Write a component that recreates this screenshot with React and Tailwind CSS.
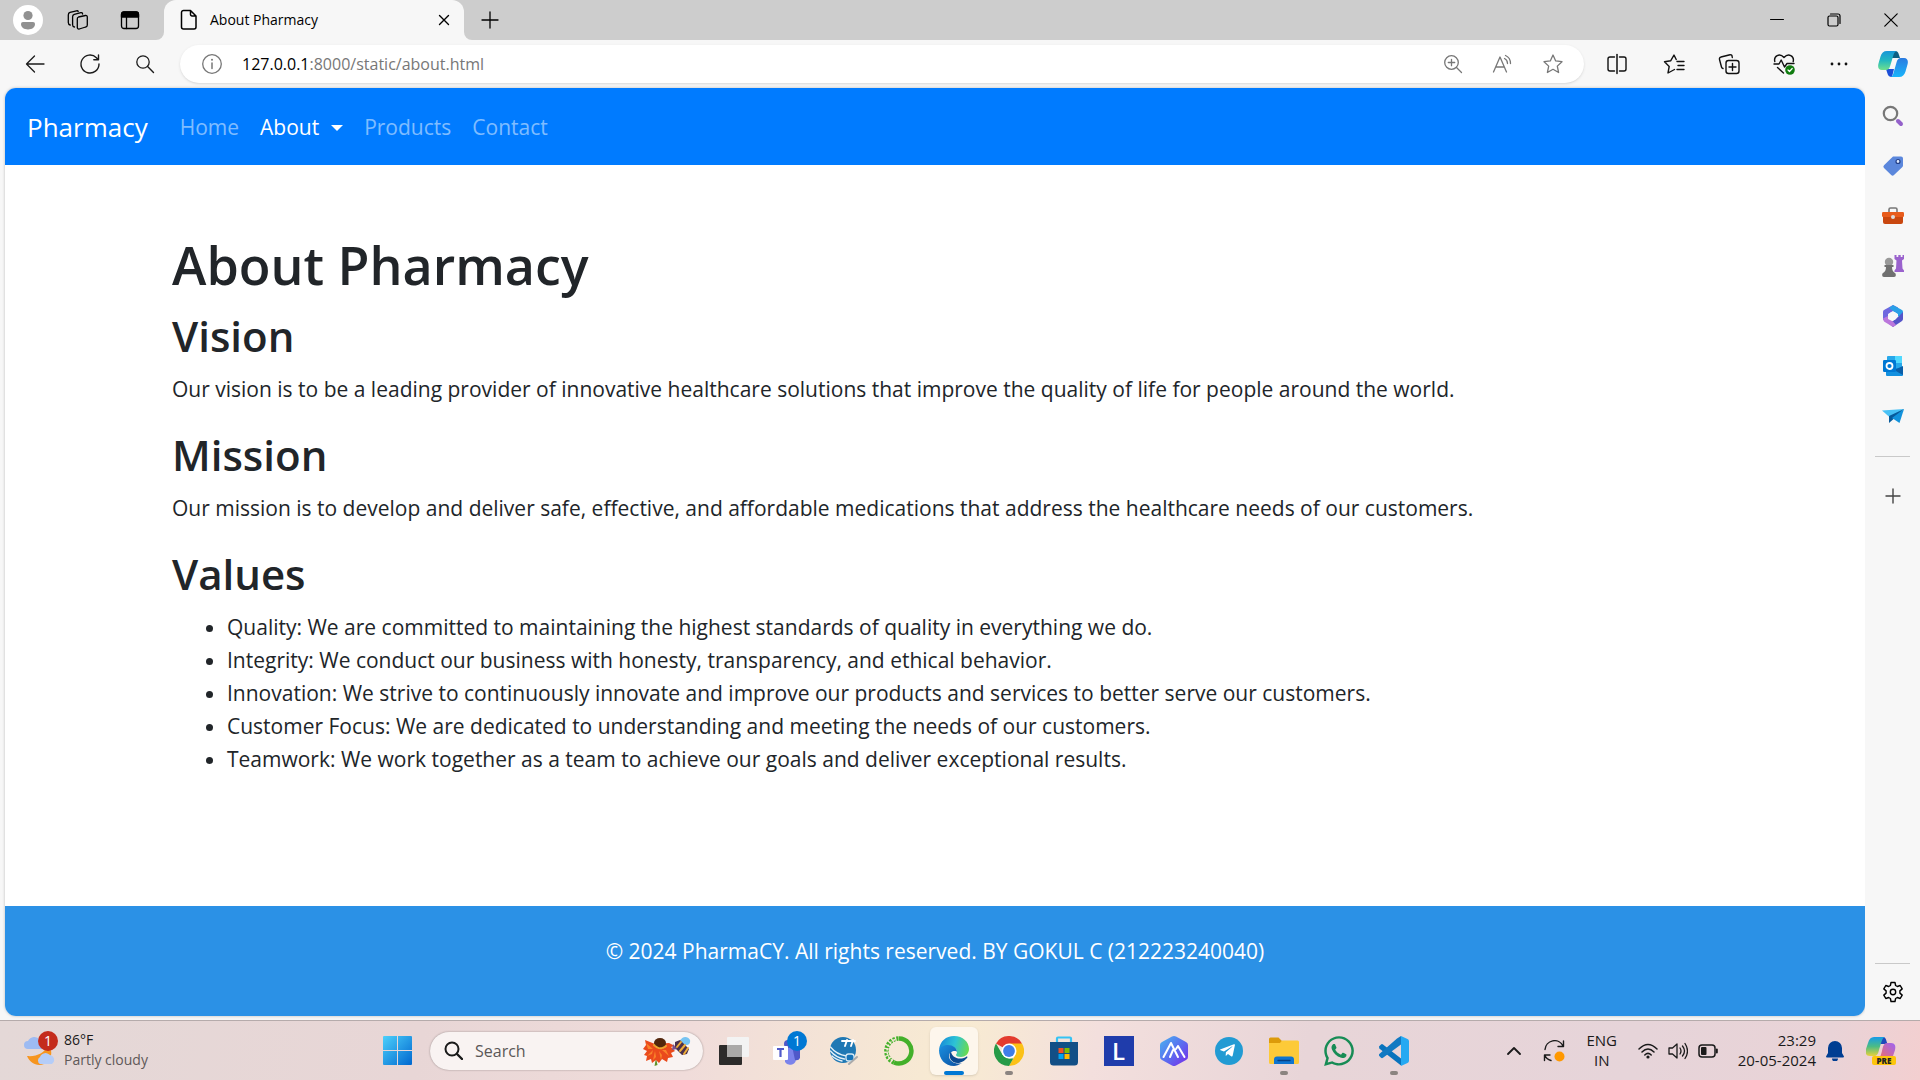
import React from 'react';
import { FaWhatsapp, FaTelegramPlane } from 'react-icons/fa';

function Svg({ w = 24, h = 24, box = '0 0 24 24', children, className = '' }) {
  return (
    <svg width={w} height={h} viewBox={box} fill="none" stroke="currentColor" strokeWidth="1.3" strokeLinecap="round" strokeLinejoin="round" className={'shrink-0 ' + className} aria-hidden="true">
      {children}
    </svg>
  );
}

function Cell({ label, className, children }) {
  return (
    <button type="button" aria-label={label} className={'flex shrink-0 items-center justify-center ' + className}>
      {children}
    </button>
  );
}

const starPath = 'M12 3 L14.7 8.9 L21 9.7 L16.3 14.1 L17.6 20.5 L12 17.3 L6.4 20.5 L7.7 14.1 L3 9.7 L9.3 8.9 Z';

function TitleBar() {
  return (
    <header className="flex h-10 shrink-0 bg-[#cdcdcd] text-black">
      <div className="flex w-[156px] items-center">
        <Cell label="Profile" className="ml-3 h-8 w-8">
          <Svg w={30} h={30} box="0 0 30 30">
            <circle cx="15" cy="15" r="15" fill="#fff" stroke="none" />
            <circle cx="15" cy="10.5" r="4.6" fill="#919191" stroke="none" />
            <path d="M10 17h10a2 2 0 0 1 2 2c0 3.600-3 5.400-7 5.400s-7-1.800-7-5.400a2 2 0 0 1 2-2z" fill="#919191" stroke="none" />
          </Svg>
        </Cell>
        <Cell label="Workspaces" className="ml-4 h-8 w-9">
          <Svg w={24} h={22} box="0 0 24 22">
            <path d="M12.500 8 l7-1.500 a1.500 1.500 0 0 1 1.800 1.500 v8 a2 2 0 0 1-1.600 2 l-6.500 2 a1.500 1.500 0 0 1-1.900-1.400 v-8.600 a2 2 0 0 1 1.200-2z" />
            <path d="M8.500 18 q-1.900-.3-1.900-2.300 v-8 q0-1.900 1.700-2.400 l6.500-1.600 q1.700-.3 1.800 1.300" />
            <path d="M4.200 16 q-1.900-.4-1.900-2.400 v-7.700 q0-2 1.700-2.500 l6.500-1.600 q1.400-.3 1.700.7" />
          </Svg>
        </Cell>
        <Cell label="Tab actions" className="ml-4 h-8 w-9">
          <Svg w={20} h={20} box="0 0 20 20">
            <rect x="1.500" y="2" width="17" height="16.500" rx="2.500" strokeWidth="1.300" />
            <path d="M1.500 4.500a2.500 2.500 0 0 1 2.500-2.500h12a2.500 2.500 0 0 1 2.500 2.500V7h-17z" fill="currentColor" />
            <path d="M6.500 7v11.500" />
          </Svg>
        </Cell>
      </div>
      <div className="w-2 shrink-0 bg-[#f7f7f7]"><div className="h-10 w-2 rounded-br-lg bg-[#cdcdcd]" /></div>
      <div className="flex w-[300px] items-center rounded-t-xl bg-[#f7f7f7] pl-4">
        <Svg w={18} h={22} box="0 0 18 22">
          <path d="M3.500 1.500h7l5.500 5.500v11a2 2 0 0 1-2 2h-10.500a2 2 0 0 1-2-2v-14.500a2 2 0 0 1 2-2zM10.500 1.500v4a1.500 1.500 0 0 0 1.500 1.500h4" strokeWidth="1.500" />
        </Svg>
        <span className="ml-3 text-sm">About Pharmacy</span>
        <Cell label="Close tab" className="mr-1 ml-auto h-8 w-8">
          <Svg w={12} h={12} box="0 0 12 12"><path d="M1.500 1.500l9 9M10.500 1.500l-9 9" strokeWidth="1.400" /></Svg>
        </Cell>
      </div>
      <div className="w-2 shrink-0 bg-[#f7f7f7]"><div className="h-10 w-2 rounded-bl-lg bg-[#cdcdcd]" /></div>
      <Cell label="New tab" className="h-10 w-9">
        <Svg w={18} h={18} box="0 0 18 18"><path d="M9 1v16M1 9h16" /></Svg>
      </Cell>
      <div className="ml-auto flex">
        <Cell label="Minimize" className="h-10 w-[57px]"><Svg w={14} h={14} box="0 0 14 14"><path d="M.5 6.500h13" strokeWidth="1" /></Svg></Cell>
        <Cell label="Restore" className="h-10 w-[57px]">
          <Svg w={14} h={14} box="0 0 14 14"><rect x="1" y="3" width="10" height="10" rx="1.500" strokeWidth="1.200" /><path d="M3.500 1h7.500a2 2 0 0 1 2 2v7.500" strokeWidth="1.200" /></Svg>
        </Cell>
        <Cell label="Close" className="h-10 w-[58px]"><Svg w={14} h={14} box="0 0 14 14"><path d="M.8.8l12.400 12.400M13.200.8L.8 13.200" strokeWidth="1.200" /></Svg></Cell>
      </div>
    </header>
  );
}

function CopilotIcon() {
  return (
    <Svg w={30} h={28} box="0 0 30 28">
      <defs>
        <linearGradient id="cpA" x1="0" y1="0" x2="0" y2="1"><stop offset="0" stopColor="#1796d8" /><stop offset=".5" stopColor="#22b8c0" /><stop offset="1" stopColor="#6fe08d" /></linearGradient>
        <linearGradient id="cpB" x1="0" y1="0" x2="0" y2="1"><stop offset="0" stopColor="#2b7be0" /><stop offset="1" stopColor="#19b5fb" /></linearGradient>
      </defs>
      <g stroke="none">
        <path d="M13 1h4c2.500 0 3.300 1.500 4 4l1 3h-8z" fill="#0d5f83" />
        <path d="M8 19h8l-2 8c-3 0-4-1.500-4.700-4z" fill="#1c4fd8" />
        <path d="M9 1h10c-2 .5-3 2-3.700 4.500l-3 10c-.8 3-2 4.500-5 4.500H4c-3.500 0-4.500-3-3.500-6.500l2-7C3.500 3 5.500 1 9 1z" fill="url(#cpA)" />
        <path d="M21 27H12c2 0 2.800-1.500 3.500-4l3-10.500C19.300 9.500 20.500 8 23 8h3c3.500 0 4.500 3 3.500 6.500l-2 7c-1 3.500-3 5.500-6.500 5.500z" fill="url(#cpB)" />
      </g>
    </Svg>
  );
}

function ToolBar() {
  return (
    <div className="flex h-12 shrink-0 items-center bg-[#f7f7f7] pl-[7px] text-[#1b1b1b]">
      <Cell label="Back" className="h-10 w-[55px]"><Svg w={20} h={20} box="0 0 20 20"><path d="M19 10H1.500M9.500 2L1.500 10l8 8" /></Svg></Cell>
      <Cell label="Refresh" className="h-10 w-[55px]">
        <Svg w={22} h={22} box="0 0 22 22"><path d="M20 11a9 9 0 1 1-2.600-6.300L19 6.500M19.500 2V6.700H14.800" strokeWidth="1.400" /></Svg>
      </Cell>
      <Cell label="Search" className="h-10 w-[55px]">
        <Svg w={20} h={20} box="0 0 20 20"><circle cx="8" cy="8" r="6.200" /><path d="M12.600 12.600L18.500 18.500" strokeWidth="1.400" /></Svg>
      </Cell>
      <div className="ml-2 flex h-[38px] min-w-0 flex-1 items-center rounded-full bg-white text-[#777] shadow-sm">
        <Cell label="Site information" className="ml-3 h-8 w-10">
          <Svg w={22} h={22} box="0 0 22 22"><circle cx="11" cy="11" r="9.300" /><path d="M11 10v5.500" strokeWidth="1.500" /><circle cx="11" cy="6.700" r="1" fill="currentColor" stroke="none" /></Svg>
        </Cell>
        <div className="ml-[10px] min-w-0 flex-1 text-base whitespace-nowrap"><span className="text-black">127.0.0.1</span>:8000/static/about.html</div>
        <Cell label="Zoom" className="h-8 w-[50px]">
          <Svg w={20} h={20} box="0 0 20 20"><circle cx="8.500" cy="8.500" r="6.800" /><path d="M13.500 13.500L18.500 18.500M8.500 5.300v6.400M5.300 8.500h6.400" /></Svg>
        </Cell>
        <Cell label="Read aloud" className="h-8 w-[50px]">
          <Svg w={22} h={20} box="0 0 22 20"><path d="M1.500 18L8 3l6.500 15M4 13h8M12.500 4.500q3 1.500 3 5M13.500 1.500q5 2.200 5 8" /></Svg>
        </Cell>
        <Cell label="Add to favourites" className="mr-[6px] h-8 w-[50px]"><Svg w={24} h={24}><path d={starPath} /></Svg></Cell>
      </div>
      <div className="flex text-[#111]">
        <Cell label="Split screen" className="ml-1 h-10 w-[58px]">
          <Svg w={22} h={22} box="0 0 22 22"><path d="M8.500 4h-4.500a2 2 0 0 0-2 2v10a2 2 0 0 0 2 2h4.500M13.500 4h4.500a2 2 0 0 1 2 2v10a2 2 0 0 1-2 2h-4.500" strokeWidth="1.400" /><path d="M11 1.500v19" strokeWidth="1.500" /></Svg>
        </Cell>
        <Cell label="Favourites" className="h-10 w-[55px]">
          <Svg w={22} h={22} box="0 0 22 22"><path d="M14 8.500h7M15 12.500h6M14 16.500h7M11.500 16.500L5 20l1.200-6.500L1.500 8.700l6.300-1L11 2 13.200 6.500" strokeWidth="1.400" /></Svg>
        </Cell>
        <Cell label="Collections" className="h-10 w-[55px]">
          <Svg w={22} h={22} box="0 0 22 22"><rect x="8" y="7.500" width="13" height="13" rx="2.500" strokeWidth="1.400" /><path d="M14.500 10.500v7M11 14h7M14.300 4.500L14 2.800a1.500 1.500 0 0 0-2-1L3 4a2 2 0 0 0-1.500 2.500l2 7.500a2 2 0 0 0 1.500 1.500" strokeWidth="1.400" /></Svg>
        </Cell>
        <Cell label="Browser essentials" className="h-10 w-[55px]">
          <Svg w={22} h={22} box="0 0 22 22">
            <path d="M1.800 8.500C.5 3 6.500-.5 11 4.500 15.500-.5 21.500 3 20.200 8.500M1 11h5l2.200-4 3.300 7 2.500-3.500h7M4.500 14.500L10.500 20" strokeWidth="1.400" />
            <circle cx="17" cy="17" r="4.800" fill="#107c10" stroke="none" /><path d="M15 17l1.500 1.500 2.700-3" stroke="#fff" strokeWidth="1.200" />
          </Svg>
        </Cell>
        <Cell label="Settings and more" className="h-10 w-[55px]">
          <Svg w={18} h={4} box="0 0 18 4"><g fill="currentColor" stroke="none"><circle cx="2" cy="2" r="1.400" /><circle cx="9" cy="2" r="1.400" /><circle cx="16" cy="2" r="1.400" /></g></Svg>
        </Cell>
        <Cell label="Copilot" className="h-10 w-[54px]"><CopilotIcon /></Cell>
      </div>
    </div>
  );
}

function SideBar() {
  return (
    <aside className="flex w-[55px] shrink-0 flex-col items-center bg-[#f7f7f7] pt-[3px]">
      <Cell label="Search" className="h-[50px] w-12">
        <Svg w={22} h={22} box="0 0 22 22"><circle cx="8.500" cy="8.500" r="6.700" stroke="#777" strokeWidth="2.200" /><path d="M16 16l3 3" stroke="#9461ca" strokeWidth="4" /></Svg>
      </Cell>
      <Cell label="Shopping" className="h-[50px] w-12">
        <Svg w={22} h={22} box="0 0 22 22"><path d="M11 1.500h8a2 2 0 0 1 2 2v7a2 2 0 0 1-.6 1.500L12 20a2 2 0 0 1-2.800 0L2 13a2 2 0 0 1 0-2.800z" fill="#5b87dc" stroke="none" /><circle cx="16" cy="6.500" r="2" fill="#dbe8ff" stroke="#243f86" strokeWidth="1.200" /></Svg>
      </Cell>
      <Cell label="Tools" className="h-[50px] w-12">
        <Svg w={22} h={20} box="0 0 22 20"><path d="M7 6V3.500A1.500 1.500 0 0 1 8.500 2h5A1.500 1.500 0 0 1 15 3.500V6" stroke="#777" strokeWidth="1.600" /><rect y="6" width="22" height="5" rx="1.200" fill="#e85c1c" stroke="none" /><path d="M1 11h20v5a2 2 0 0 1-2 2H3a2 2 0 0 1-2-2z" fill="#c9470f" stroke="none" /><circle cx="11" cy="11" r="2" fill="#ddd" stroke="none" /></Svg>
      </Cell>
      <Cell label="Games" className="h-[50px] w-12">
        <Svg w={22} h={22} box="0 0 22 22"><g stroke="none"><path d="M12.500 0h2v2h1.800V0h2.400v2h1.800V0H22v4l-2 1.500.5 8 1.500 2v1.500h-9.500v-1.500l1.500-2 .5-8-2-1.500z" fill="#9a62cd" /><circle cx="7" cy="7" r="4.200" fill="#999" /><path d="M2.500 10h9v2H10c0 3 1 5 3 6 1 .5 1.500 4-1 4H2c-2.500 0-2-3.500-1-4 2-1 3-3 3-6H2.500z" fill="#707070" /></g></Svg>
      </Cell>
      <Cell label="Microsoft 365" className="h-[50px] w-12">
        <Svg w={20} h={22} box="0 0 20 22"><g stroke="none"><path d="M10 0l5 2.500v6L10 6 5 9v9L1 15.500Q0 15 0 13.500V7q0-1.500 1-2z" fill="#6f67df" /><path d="M10 0l9 5q1 .5 1 2v7l-5-2.800V9L10 6 6 3z" fill="#2aa0e7" /><path d="M20 7v7q0 1-1 2l-9 6-5-4 5-2 5-4z" fill="#5554c9" /><path d="M0 13.500l5-2.500v3l5 2.500 3 3.500-3 2-9-5.500z" fill="#bb77dc" /><circle cx="10" cy="11" r="4.200" fill="#f7f7f7" /></g></Svg>
      </Cell>
      <Cell label="Outlook" className="h-[50px] w-12">
        <Svg w={20} h={20} box="0 0 20 20"><g stroke="none"><rect x="4" width="15" height="14" rx="1" fill="#28a8ea" /><path d="M12 0h7v7h-7z" fill="#50d9ff" /><path d="M3 12h17v7q0 1-1 1H4q-1 0-1-1z" fill="#1490df" /><path d="M20 10v9L11 14z" fill="#0a5ea8" /><rect y="4" width="13" height="12" rx="1.200" fill="#0078d4" /></g><circle cx="6.500" cy="10" r="3" stroke="#fff" strokeWidth="1.800" /></Svg>
      </Cell>
      <Cell label="Drop" className="h-[50px] w-12">
        <Svg w={22} h={16} box="0 0 22 16"><g stroke="none"><path d="M0 2.500L22 1 8 9.500z" fill="#48c1f5" /><path d="M22 1L7 8v7l4-3.500z" fill="#075a9b" /><path d="M22 1l-4.500 14L10 10z" fill="#1292dc" /></g></Svg>
      </Cell>
      <div className="mt-[15px] h-px w-[35px] bg-[#c9c9c9]" />
      <Cell label="Customize" className="mt-[15px] h-12 w-12 text-[#444]"><Svg w={16} h={16} box="0 0 16 16"><path d="M8 1v14M1 8h14" strokeWidth="1.400" /></Svg></Cell>
      <div className="mt-auto h-px w-[35px] bg-[#c9c9c9]" />
      <Cell label="Settings" className="mt-2 mb-1 h-10 w-12 text-black">
        <Svg w={22} h={22} box="0 0 22 22"><path d="M9 1.500h4l.6 3 1.700 1 2.900-1 2 3.400-2.300 2v2.200l2.300 2-2 3.400-2.900-1-1.700 1-.6 3H9l-.6-3-1.700-1-2.900 1-2-3.400 2.300-2V9.900l-2.300-2 2-3.400 2.900 1 1.700-1z" strokeWidth="1.400" /><circle cx="11" cy="11" r="2.700" strokeWidth="1.400" /></Svg>
      </Cell>
    </aside>
  );
}

function WebPage() {
  return (
    <div className="flex min-w-0 flex-1 flex-col overflow-hidden rounded-[11px] bg-white text-[21px] leading-[33px] text-[#212529] shadow-[0_0_3px_#00000040]">
      <nav className="flex h-[77px] shrink-0 items-center bg-[#007bff] pt-[2px] pl-[22px] text-white/50">
        <a href="#top" className="mr-[22px] text-[26px] text-white">Pharmacy</a>
        <a href="#home" className="px-[10px]">Home</a>
        <a href="#about" className="flex items-center px-[11px] text-white">About<span className="ml-3 border-x-[6px] border-t-[6px] border-x-transparent border-t-white" /></a>
        <a href="#products" className="px-[10px]">Products</a>
        <a href="#contact" className="px-[11px]">Contact</a>
      </nav>
      <main className="flex-1 px-[167px] pt-[67px]">
        <h1 className="mb-[11px] text-[52px] leading-[66px] font-semibold">About Pharmacy</h1>
        <h2 className="mb-[11px] text-[42px] leading-[53px] font-semibold">Vision</h2>
        <p className="mb-[22px]">Our vision is to be a leading provider of innovative healthcare solutions that improve the quality of life for people around the world.</p>
        <h2 className="mb-[11px] text-[42px] leading-[53px] font-semibold">Mission</h2>
        <p className="mb-[22px]">Our mission is to develop and deliver safe, effective, and affordable medications that address the healthcare needs of our customers.</p>
        <h2 className="mb-[11px] text-[42px] leading-[53px] font-semibold">Values</h2>
        <ul className="list-disc pl-[55px]">
          <li>Quality: We are committed to maintaining the highest standards of quality in everything we do.</li>
          <li>Integrity: We conduct our business with honesty, transparency, and ethical behavior.</li>
          <li>Innovation: We strive to continuously innovate and improve our products and services to better serve our customers.</li>
          <li>Customer Focus: We are dedicated to understanding and meeting the needs of our customers.</li>
          <li>Teamwork: We work together as a team to achieve our goals and deliver exceptional results.</li>
        </ul>
      </main>
      <footer className="h-[110px] shrink-0 bg-[#2b91e6] pt-[29px] text-center text-white">© 2024 PharmaCY. All rights reserved. BY GOKUL C (212223240040)</footer>
    </div>
  );
}

function AppButton({ label, active, running, children }) {
  return (
    <div className="flex w-[55px] shrink-0 justify-center">
      <button type="button" aria-label={label} className={'relative flex h-12 w-12 items-center justify-center rounded-md ' + (active ? 'bg-[#fdf6ec] shadow-sm' : '')}>
        {children}
        {active && <span className="absolute bottom-0 h-1 w-5 rounded-full bg-[#0078d4]" />}
        {running && <span className="absolute bottom-0 h-1 w-2 rounded-full bg-[#8b8480]" />}
      </button>
    </div>
  );
}

function TaskBar() {
  return (
    <footer className="flex h-[60px] shrink-0 items-center border-t border-[#b5abab] bg-[linear-gradient(100deg,#e4d8d7_0%,#e8d6d6_22%,#f0dcda_36%,#f8ebd2_50%,#f3dfdd_57%,#e8d5d8_68%,#e6d4d9_85%,#e9d3d7_95%,#f3cfd0_100%)] text-[#1a1a1a]">
      <button type="button" className="flex w-[370px] shrink-0 items-center gap-[6px] pl-6 text-left">
        <Svg w={34} h={40} box="0 0 34 40">
          <g stroke="none">
            <path d="M3 25c9 1 18-3 20-10 7 3 5 14-3 18-7 3-14-1-17-8z" fill="#f6951f" />
            <path d="M4 18a4 4 0 0 1 0-8 7 7 0 0 1 12-1 5 5 0 0 1 2 9z" fill="#9dbbf2" />
            <path d="M16 33a4 4 0 0 1 0-7 6 6 0 0 1 10-2 5 5 0 0 1 2 9z" fill="#b5cdf8" />
            <circle cx="24" cy="10" r="10" fill="#c42b1c" />
          </g>
          <text x="24" y="15" fill="#fff" stroke="none" fontSize="14" textAnchor="middle">1</text>
        </Svg>
        <span className="flex flex-col pb-[2px] text-[14px] leading-5"><span>86°F</span><span className="text-[#5f5959]">Partly cloudy</span></span>
      </button>
      <AppButton label="Start">
        <Svg w={30} h={30} box="0 0 30 30">
          <defs><linearGradient id="win" x1="0" y1="0" x2="1" y2="1"><stop offset="0" stopColor="#4cd0fb" /><stop offset="1" stopColor="#0067cf" /></linearGradient></defs>
          <path d="M1 0H14v14H0V1A1 1 0 0 1 1 0zM15 0h13A1 1 0 0 1 29 1V14H15zM0 15h14v14H1A1 1 0 0 1 0 28zM15 15h14v13a1 1 0 0 1-1 1H15z" fill="url(#win)" stroke="none" />
        </Svg>
      </AppButton>
      <label className="ml-[5px] flex h-[38px] w-[273px] shrink-0 items-center rounded-full bg-[#f9f3f2] pr-3 pl-[14px] shadow-[0_0_2px_#00000060]">
        <Svg w={19} h={19} box="0 0 19 19"><circle cx="8" cy="8" r="6.500" strokeWidth="2" /><path d="M13 13l5 5" strokeWidth="2.400" /></Svg>
        <input aria-label="Search" placeholder="Search" className="ml-3 w-0 flex-1 bg-transparent text-base outline-none placeholder:text-[#5b5757]" />
        <Svg w={48} h={30} box="0 0 48 30">
          <g stroke="none">
            <path d="M13 22l1.500 7-3 1z" fill="#5f9226" />
            <path d="M12 8L2 4 3 9 0 13l4 2-3 4 3 1-1 5 5-2 1 4 4-3 3 3 3-4 5 3 1-4 5-1-2-4 4-2-4-4 4-1-6-3z" fill="#ea4a1c" />
            <path d="M10 13l-7-6 2 6zM10 14l-6 6 5-2zM12 15l-2 9 3-3zM16 15l2 9 1-5zM19 14l7 6-3-6z" fill="#f9822a" />
            <ellipse cx="17" cy="7" rx="6" ry="5" fill="#52260c" />
            <path d="M11 9q6 6 12 1" stroke="#eda52f" strokeWidth="2" strokeDasharray="1 1.500" />
            <path d="M37 5c2-5 8-5 10-1 1 5-4 6-8 5z" fill="#76c4f2" />
            <path d="M32 6l5-2 9 9-2 5-5 1-7-7z" fill="#4b304d" />
            <path d="M34 11l4-5M37 15l5-6M41 18l4-6" stroke="#efae38" strokeWidth="2" />
            <path d="M30 8l-1 6 5-1z" fill="#79508c" />
          </g>
        </Svg>
      </label>
      <div className="ml-[3px] flex">
        <AppButton label="Task view">
          <Svg w={30} h={28} box="0 0 30 28"><rect y="8" width="23" height="20" rx="1" fill="#2c2b2a" stroke="none" /><rect x="8" width="22" height="20" rx="1" fill="#f3f3f3" stroke="none" /><path d="M8 8h15v12H8z" fill="#aaa9a8" stroke="none" /></Svg>
        </AppButton>
        <AppButton label="Teams, 1 notification">
          <Svg w={36} h={40} box="0 0 36 40">
            <g stroke="none"><path d="M14 13h11v14a6 6 0 0 1-11 4z" fill="#7b83eb" /><path d="M21 15h8v12a4 4 0 0 1-5 2z" fill="#5059c9" /><circle cx="17" cy="13" r="4" fill="#5059c9" /><rect x="2" y="15" width="15" height="14" rx="1" fill="#fff" /><circle cx="26" cy="10" r="10" fill="#0078d4" /></g>
            <path d="M6 18h7M9.500 18v8" stroke="#5059c9" strokeWidth="2.200" strokeLinecap="butt" />
            <text x="26" y="15" fill="#fff" stroke="none" fontSize="14" textAnchor="middle">1</text>
          </Svg>
        </AppButton>
        <AppButton label="Network globe">
          <Svg w={30} h={30} box="0 0 30 30"><circle cx="14" cy="14" r="13" fill="#1f78b4" stroke="none" /><path d="M1.500 11c4 5 9 8 16 9M1.500 15c4 5 8 7 14 8M3 20c3 3 6 4 10 5" stroke="#e4f0f8" strokeWidth="1.300" /><path d="M13 5h13M18 4l-2 6M24 4l-2 6" stroke="#fff" strokeWidth="1.900" /><rect x="17" y="18" width="8" height="7" rx="2.500" fill="#1674b8" stroke="#d4e8f4" /><path d="M20 28l8-7" stroke="#aaa" strokeWidth="2" /></Svg>
        </AppButton>
        <AppButton label="Anaconda">
          <Svg w={30} h={30} box="0 0 30 30"><path d="M15 2.500a12.500 12.500 0 1 1-5 24" stroke="#43b02a" strokeWidth="4.500" strokeLinecap="butt" /><path d="M10 26.500A12.500 12.500 0 0 1 15 2.500" stroke="#43b02a" strokeWidth="4.500" strokeDasharray="2.200 1.300" strokeLinecap="butt" /><path d="M8 24.500A12 12 0 0 1 13 3" stroke="#f8eadb" strokeWidth="1.500" strokeDasharray="1 3" /></Svg>
        </AppButton>
        <AppButton label="Microsoft Edge" active>
          <Svg w={30} h={30} box="0 0 30 30">
            <defs><linearGradient id="edgeT" x1="0" y1=".4" x2="1" y2=".6"><stop offset="0" stopColor="#168bd9" /><stop offset=".5" stopColor="#2dc3d5" /><stop offset="1" stopColor="#6adb4b" /></linearGradient><linearGradient id="edgeB" x1="0" y1="0" x2="1" y2="1"><stop offset="0" stopColor="#1a8fe0" /><stop offset="1" stopColor="#0c4f9f" /></linearGradient></defs>
            <g stroke="none"><path d="M0 14C1 5 7 0 15 0c9 0 15 6 15 13 0 5-4 8-8 8-3 0-5-1-5-2 0-.7 1-1 1-3 0-3-3-6-8-6-5 0-9 2-10 4z" fill="url(#edgeT)" /><path d="M0 14c1-3 5-5 9-5 5 0 9 3 9 7-1-2-8-1-8 4 0 6 8 9 13 7-3 2-6 3-8 3C6 30 0 23 0 14z" fill="url(#edgeB)" /><path d="M12 15c-4 6 1 13 8 12 4-1 6-3 8-5 1-1 0-2-1-1-7 4-15 0-15-6z" fill="#0b4a91" /></g>
          </Svg>
        </AppButton>
        <AppButton label="Google Chrome" running>
          <Svg w={30} h={30} box="0 0 30 30"><g stroke="none"><path d="M15 15L2 7.500A15 15 0 0 1 28 7.500z" fill="#e33b2e" /><path d="M15 7.500h13A15 15 0 0 1 15 30l6.500-11.200z" fill="#fbc116" /><path d="M2 7.500l6.500 11.300L15 22.500h4.300L15 30A15 15 0 0 1 2 7.500z" fill="#269a46" /><circle cx="15" cy="15" r="7.500" fill="#fff" /><circle cx="15" cy="15" r="5.900" fill="#3f7de8" /></g></Svg>
        </AppButton>
        <AppButton label="Microsoft Store">
          <Svg w={30} h={30} box="0 0 30 30"><path d="M8 6V2.500A1 1 0 0 1 9 1.500h12a1 1 0 0 1 1 1V6" stroke="#35c3f4" strokeWidth="2.200" /><path d="M1 6h28v20a3.500 3.500 0 0 1-3.500 3.500h-21A3.500 3.500 0 0 1 1 26z" fill="#124f86" stroke="none" /><g stroke="none"><path d="M9.500 12h5v5h-5z" fill="#f25022" /><path d="M15.500 12h5v5h-5z" fill="#7fba00" /><path d="M9.500 18h5v5h-5z" fill="#00a4ef" /><path d="M15.500 18h5v5h-5z" fill="#ffb900" /></g></Svg>
        </AppButton>
        <AppButton label="L"><span className="flex h-[30px] w-[30px] items-center justify-center bg-[#1f3cab] text-2xl font-semibold text-white">L</span></AppButton>
        <AppButton label="Design assistant">
          <Svg w={28} h={30} box="0 0 28 30"><defs><linearGradient id="hex" x1="0" y1="0" x2="1" y2="1"><stop offset="0" stopColor="#49b5ef" /><stop offset=".5" stopColor="#5a6ff0" /><stop offset="1" stopColor="#7929e8" /></linearGradient></defs><path d="M12 .6q2-1 4 0l10 5.500q2 1 2 3v12q0 2-2 3l-10 5.500q-2 1-4 0l-10-5.500q-2-1-2-3v-12q0-2 2-3z" fill="url(#hex)" stroke="none" /><path d="M3.500 21l7.500-14L18 21M10 21l3-7M18 10l6.500 11M18 10l-2 3" stroke="#fff" strokeWidth="2" /></Svg>
        </AppButton>
        <AppButton label="Telegram"><span className="flex h-7 w-7 items-center justify-center rounded-full bg-[#229bd3] pr-0.5 text-white"><FaTelegramPlane size={17} /></span></AppButton>
        <AppButton label="File Explorer" running>
          <Svg w={30} h={28} box="0 0 30 28"><g stroke="none"><path d="M0 2a1.500 1.500 0 0 1 1.500-1.500h8L13 4v5H0z" fill="#dc9b0a" /><path d="M0 6h11l2-2.500h15.500A1.500 1.500 0 0 1 30 5v20.500a1.500 1.500 0 0 1-1.500 1.500h-27A1.500 1.500 0 0 1 0 25.500z" fill="#fdca38" /><path d="M5 27v-4.500A3 3 0 0 1 8 19.500h14a3 3 0 0 1 3 3V27z" fill="#0f75d0" /></g><path d="M9 23.500h12" stroke="#064184" /></Svg>
        </AppButton>
        <AppButton label="WhatsApp"><FaWhatsapp size={34} color="#178c55" /></AppButton>
        <AppButton label="Visual Studio Code" running>
          <Svg w={30} h={30} box="0 0 30 30"><g stroke="none"><path d="M0 10.500l2-2a1.500 1.500 0 0 1 2 0L22 22.500v7L.3 12.500z" fill="#0873bd" /><path d="M.3 18L18 2.500 22 0v8.500L4 21.700a1.500 1.500 0 0 1-2 0L.3 20a1.500 1.500 0 0 1 0-2z" fill="#1179c2" /><path d="M22 0l6.500 3A2.500 2.500 0 0 1 30 5v20a2.500 2.500 0 0 1-1.500 2L22 30z" fill="#25a9f2" /></g></Svg>
        </AppButton>
      </div>
      <div className="ml-auto flex shrink-0 items-center pr-6">
        <Cell label="Show hidden icons" className="h-10 w-10"><Svg w={14} h={9} box="0 0 14 9"><path d="M1 8l6-6 6 6" strokeWidth="1.800" /></Svg></Cell>
        <Cell label="Updates" className="h-10 w-10"><Svg w={22} h={22} box="0 0 22 22"><path d="M2 9.500A9.500 9.500 0 0 1 20 6M20.500 1v5.500H15M1.500 20.500V15H7M2 15.500c1 3 3 4 6 5" strokeWidth="1.400" /><circle cx="16.500" cy="16.500" r="5" fill="#ff9800" stroke="none" /></Svg></Cell>
        <button type="button" className="w-14 pb-[2px] text-center text-[15px] leading-5">ENG<br />IN</button>
        <button type="button" aria-label="Network, volume and battery" className="ml-2 flex items-center gap-[10px]">
          <Svg w={20} h={16} box="0 0 20 16"><path d="M1 6q9-9 18 0M4 9q6-6 12 0M6.800 12q3.200-3.200 6.400 0" strokeWidth="1.500" /><circle cx="10" cy="14" r="1.600" fill="currentColor" stroke="none" /></Svg>
          <Svg w={20} h={18} box="0 0 20 18"><path d="M1 6h3.500L9 2v14l-4.500-4H1zM12 6q2 3 0 6M14.500 4q4 5 0 10M17 1.500q5 7.500 0 15" /></Svg>
          <Svg w={20} h={14} box="0 0 20 14"><rect x="1" y="1" width="16" height="12" rx="3" strokeWidth="1.500" /><rect x="3" y="3" width="5.500" height="8" rx="1" fill="currentColor" stroke="none" /><path d="M18.800 5.500v3" strokeWidth="2" /></Svg>
        </button>
        <button type="button" className="ml-5 pb-[2px] text-right text-[15px] leading-5">23:29<br />20-05-2024</button>
        <Cell label="Notifications" className="ml-[10px] h-10 w-[18px]"><Svg w={18} h={20} box="0 0 18 20"><path d="M9 0a7 7 0 0 1 7 7v5l2 3.500q0 1-1 1H1q-1 0-1-1L2 12V7a7 7 0 0 1 7-7zM6 17.500h6a3 3 0 0 1-6 0z" fill="#003e92" stroke="none" /></Svg></Cell>
        <Cell label="Copilot preview" className="ml-[22px] h-10 w-[30px]">
          <Svg w={30} h={30} box="0 0 30 30">
            <defs><linearGradient id="pa" x1="0" y1="0" x2="0" y2="1"><stop offset="0" stopColor="#169be8" /><stop offset=".5" stopColor="#4cbc84" /><stop offset="1" stopColor="#e8d23a" /></linearGradient><linearGradient id="pb" x1="1" y1="0" x2="0" y2="1"><stop offset="0" stopColor="#9d62f5" /><stop offset="1" stopColor="#fb7350" /></linearGradient></defs>
            <g stroke="none"><path d="M12 1h5c3 0 3 3 4.500 7h-8z" fill="#1f49ba" /><path d="M8 1h11c-3 1-3.500 5-6 13-1 4-2 6-5 6H4c-4 0-5-3-4-7l2-6c1-4 3-6 6-6z" fill="url(#pa)" /><path d="M21 25H11c2 0 3-3 5-10 1-5 2-8 5-8h4c4 0 5 3 4 7l-2 6c-1 4-3 5-6 5z" fill="url(#pb)" /><rect x="6" y="20" width="24" height="9" rx="2" fill="#fdc50b" /></g>
            <text x="18" y="27.500" fill="#222" stroke="none" fontSize="8" fontWeight="800" textAnchor="middle">PRE</text>
          </Svg>
        </Cell>
      </div>
    </footer>
  );
}

export default function App() {
  return (
    <div className="flex min-h-screen flex-col overflow-hidden bg-[#f7f7f7] font-['Open_Sans','Noto_Sans',sans-serif]">
      <TitleBar />
      <ToolBar />
      <div className="flex flex-1 pb-1 pl-[5px]">
        <WebPage />
        <SideBar />
      </div>
      <TaskBar />
    </div>
  );
}
